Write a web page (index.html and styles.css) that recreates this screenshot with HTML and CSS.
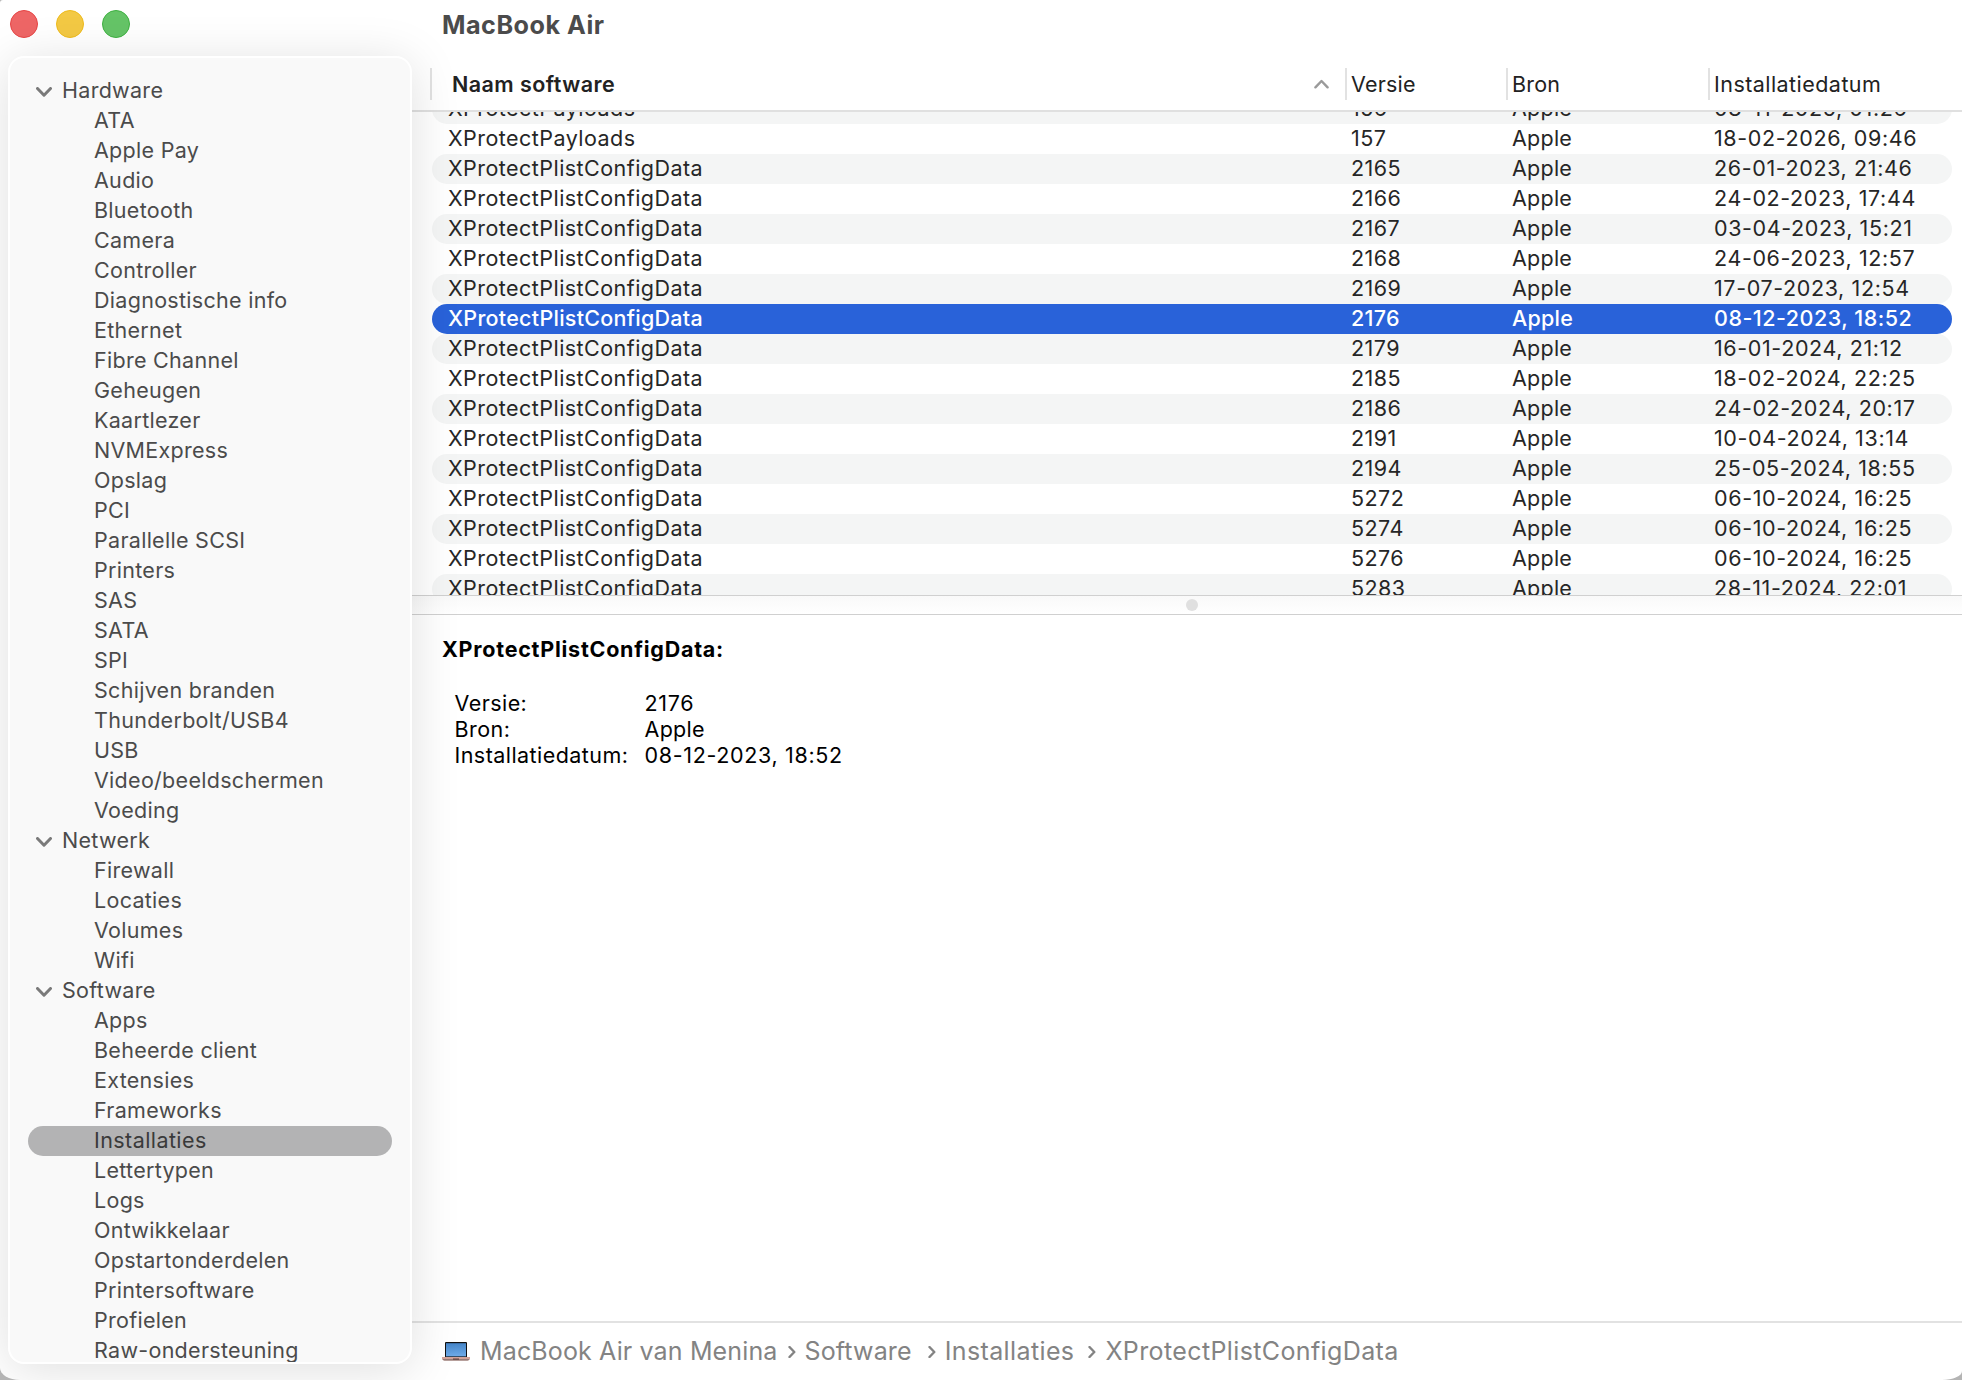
FILE: index.html
```html
<!DOCTYPE html>
<html lang="nl">
<head>
<meta charset="utf-8">
<title>MacBook Air</title>
<link rel="stylesheet" href="styles.css">
</head>
<body>
<div class="window">
  <div class="left">
    <div class="lights"><span class="light red"></span><span class="light yellow"></span><span class="light green"></span></div>
    <nav class="sidebar">
      <div class="group"><svg class="chev" viewBox="0 0 16 10"><path d="M1.5 1.5 8 8.2 14.5 1.5"/></svg>Hardware</div>
      <div class="item">ATA</div>
      <div class="item">Apple Pay</div>
      <div class="item">Audio</div>
      <div class="item">Bluetooth</div>
      <div class="item">Camera</div>
      <div class="item">Controller</div>
      <div class="item">Diagnostische info</div>
      <div class="item">Ethernet</div>
      <div class="item">Fibre Channel</div>
      <div class="item">Geheugen</div>
      <div class="item">Kaartlezer</div>
      <div class="item">NVMExpress</div>
      <div class="item">Opslag</div>
      <div class="item">PCI</div>
      <div class="item">Parallelle SCSI</div>
      <div class="item">Printers</div>
      <div class="item">SAS</div>
      <div class="item">SATA</div>
      <div class="item">SPI</div>
      <div class="item">Schijven branden</div>
      <div class="item">Thunderbolt/USB4</div>
      <div class="item">USB</div>
      <div class="item">Video/beeldschermen</div>
      <div class="item">Voeding</div>
      <div class="group"><svg class="chev" viewBox="0 0 16 10"><path d="M1.5 1.5 8 8.2 14.5 1.5"/></svg>Netwerk</div>
      <div class="item">Firewall</div>
      <div class="item">Locaties</div>
      <div class="item">Volumes</div>
      <div class="item">Wifi</div>
      <div class="group"><svg class="chev" viewBox="0 0 16 10"><path d="M1.5 1.5 8 8.2 14.5 1.5"/></svg>Software</div>
      <div class="item">Apps</div>
      <div class="item">Beheerde client</div>
      <div class="item">Extensies</div>
      <div class="item">Frameworks</div>
      <div class="item active">Installaties</div>
      <div class="item">Lettertypen</div>
      <div class="item">Logs</div>
      <div class="item">Ontwikkelaar</div>
      <div class="item">Opstartonderdelen</div>
      <div class="item">Printersoftware</div>
      <div class="item">Profielen</div>
      <div class="item">Raw-ondersteuning</div>
    </nav>
  </div>
  <main class="main">
    <h1 class="title">MacBook Air</h1>
    <div class="thead">
      <div class="th name">Naam software<svg class="sort" viewBox="0 0 16 10"><path d="M1.5 8.5 8 1.8 14.5 8.5"/></svg></div>
      <div class="th short">Versie</div>
      <div class="th short">Bron</div>
      <div class="th">Installatiedatum</div>
    </div>
    <div class="table">
      <div class="row"><span>XProtectPayloads</span><span>156</span><span>Apple</span><span>08-11-2025, 01:26</span></div>
      <div class="row"><span>XProtectPayloads</span><span>157</span><span>Apple</span><span>18-02-2026, 09:46</span></div>
      <div class="row"><span>XProtectPlistConfigData</span><span>2165</span><span>Apple</span><span>26-01-2023, 21:46</span></div>
      <div class="row"><span>XProtectPlistConfigData</span><span>2166</span><span>Apple</span><span>24-02-2023, 17:44</span></div>
      <div class="row"><span>XProtectPlistConfigData</span><span>2167</span><span>Apple</span><span>03-04-2023, 15:21</span></div>
      <div class="row"><span>XProtectPlistConfigData</span><span>2168</span><span>Apple</span><span>24-06-2023, 12:57</span></div>
      <div class="row"><span>XProtectPlistConfigData</span><span>2169</span><span>Apple</span><span>17-07-2023, 12:54</span></div>
      <div class="row selected"><span>XProtectPlistConfigData</span><span>2176</span><span>Apple</span><span>08-12-2023, 18:52</span></div>
      <div class="row"><span>XProtectPlistConfigData</span><span>2179</span><span>Apple</span><span>16-01-2024, 21:12</span></div>
      <div class="row"><span>XProtectPlistConfigData</span><span>2185</span><span>Apple</span><span>18-02-2024, 22:25</span></div>
      <div class="row"><span>XProtectPlistConfigData</span><span>2186</span><span>Apple</span><span>24-02-2024, 20:17</span></div>
      <div class="row"><span>XProtectPlistConfigData</span><span>2191</span><span>Apple</span><span>10-04-2024, 13:14</span></div>
      <div class="row"><span>XProtectPlistConfigData</span><span>2194</span><span>Apple</span><span>25-05-2024, 18:55</span></div>
      <div class="row"><span>XProtectPlistConfigData</span><span>5272</span><span>Apple</span><span>06-10-2024, 16:25</span></div>
      <div class="row"><span>XProtectPlistConfigData</span><span>5274</span><span>Apple</span><span>06-10-2024, 16:25</span></div>
      <div class="row"><span>XProtectPlistConfigData</span><span>5276</span><span>Apple</span><span>06-10-2024, 16:25</span></div>
      <div class="row"><span>XProtectPlistConfigData</span><span>5283</span><span>Apple</span><span>28-11-2024, 22:01</span></div>
    </div>
    <div class="splitter"><span class="knob"></span></div>
    <section class="detail">
      <h2 class="dtitle">XProtectPlistConfigData:</h2>
      <dl class="facts">
        <dt>Versie:</dt><dd>2176</dd>
        <dt>Bron:</dt><dd class="word">Apple</dd>
        <dt>Installatiedatum:</dt><dd>08-12-2023, 18:52</dd>
      </dl>
    </section>
    <footer class="path">
      <svg class="laptop" viewBox="0 0 28 20"><defs><linearGradient id="scr" x1="0" y1="0" x2="0" y2="1"><stop offset="0" stop-color="#4585c8"/><stop offset="1" stop-color="#6fabe8"/></linearGradient></defs><rect x="3" y="0" width="22" height="15.5" rx="1" fill="#111"/><rect x="4" y="1.2" width="20" height="13.2" fill="url(#scr)"/><path d="M0 15h28v1.8q-.6 1.7-2.4 1.7H2.4Q.6 18.500 0 16.800z" fill="#d3a49a"/><path d="M.4 17.300h27.200q-.8 1.200-2.200 1.200H2.600q-1.400 0-2.200-1.200z" fill="#85706c"/><path d="M11 16.500h6v1.200h-6z" fill="#5c3f3c"/></svg>
      <span class="device">MacBook Air van Menina</span><svg class="sep" viewBox="0 0 8 12"><path d="M1.500 1 6.300 6 1.500 11"/></svg><span class="section">Software</span><svg class="sep" viewBox="0 0 8 12"><path d="M1.500 1 6.300 6 1.500 11"/></svg><span class="page">Installaties</span><svg class="sep" viewBox="0 0 8 12"><path d="M1.500 1 6.300 6 1.500 11"/></svg><span>XProtectPlistConfigData</span>
    </footer>
  </main>
</div>
</body>
</html>
```
FILE: styles.css
```css
* { box-sizing: border-box; margin: 0; padding: 0; }
body { background: #b4b4b4; font-family: Inter, sans-serif; font-size: 21.5px; color: #262626; }
.window { display: flex; width: 1962px; height: 1380px; background: #fff; border-radius: 3px 0 20px 20px / 3px 0 9px 12px; overflow: hidden; }
.left { position: relative; z-index: 1; width: 412px; padding-left: 8px; flex: none; display: flex; flex-direction: column; }
.lights { display: flex; gap: 18px; height: 56px; padding: 10px 0 0 2px; }
.light { width: 28px; height: 28px; border-radius: 50%; border: 1px solid; }
.red { background: #ee6666; border-color: #e64545; }
.yellow { background: #f3c944; border-color: #eebb1c; }
.green { background: #65c467; border-color: #3eb141; }
.sidebar { height: 1308px; border: 2px solid #fff; border-radius: 16px; padding: 18px 18px 0; overflow: hidden; background: #f9f9f9; box-shadow: 0 6px 50px rgba(0,0,0,.13); color: #4b4b4b; letter-spacing: .29px; }
.group, .item { height: 30px; line-height: 28px; white-space: nowrap; }
.group { display: flex; padding-left: 8px; }
.chev { width: 16px; height: 10px; margin: 11px 10px 0 0; }
.chev path, .sort path { fill: none; stroke: #7a7a7a; stroke-width: 3; stroke-linecap: round; stroke-linejoin: round; }
.item { padding-left: 66px; }
.active { background: #b3b3b4; border-radius: 15px; color: #3a3a3a; letter-spacing: .42px; }
.main { flex: 1; display: flex; flex-direction: column; min-width: 0; }
.title { height: 68px; padding-left: 30px; font-size: 25.2px; font-weight: 700; line-height: 50px; color: #4b4b4b; letter-spacing: .5px; }
.thead { height: 44px; padding-left: 18px; border-bottom: 2px solid #e0e0e0; display: grid; grid-template-columns: 915px 161px 202px 1fr; }
.th { height: 32px; border-left: 2px solid #e2e2e2; padding-left: 4px; line-height: 32px; color: #222; letter-spacing: .45px; }
.short { letter-spacing: .2px; }
.name { display: flex; justify-content: space-between; padding: 0 16px 0 20px; font-weight: 600; }
.sort { width: 15px; height: 10px; margin-top: 11px; }
.sort path { stroke: #9a9a9a; stroke-width: 2.6; }
.table { height: 483px; overflow: hidden; padding: 0 10px 0 20px; }
.row { height: 30px; line-height: 28px; border-radius: 15px; padding-left: 16px; display: grid; grid-template-columns: 903px 161px 202px 1fr; white-space: nowrap; letter-spacing: .45px; }
.row span:nth-child(3) { letter-spacing: .25px; }
.row span:nth-child(4) { letter-spacing: .62px; }
.row:first-child { margin-top: -18px; }
.row:nth-child(odd) { background: #f4f5f5; }
.row.selected { background: #2962d9; color: #fff; font-weight: 500; letter-spacing: .27px; }
.row.selected span:nth-child(4) { letter-spacing: .5px; }
.splitter { height: 20px; border-top: 1px solid #d0d0d0; border-bottom: 1px solid #d0d0d0; background: linear-gradient(#f9f9f9, #fff); display: flex; justify-content: center; align-items: center; padding-left: 9px; }
.knob { width: 12px; height: 12px; border-radius: 50%; background: #e0e0e0; }
.detail { flex: 1; padding: 20px 0 0 30px; color: #000; }
.dtitle { font-size: 21.5px; line-height: 28px; font-weight: 700; letter-spacing: .75px; }
.facts { display: grid; grid-template-columns: 190px 1fr; line-height: 26px; padding: 27px 0 0 12.5px; letter-spacing: .44px; }
.facts dd { letter-spacing: .66px; }
.facts .word { letter-spacing: .3px; }
.path { height: 59px; border-top: 2px solid #e2e2e2; display: flex; align-items: center; padding: 0 0 2px 30px; font-size: 25px; color: #838383; white-space: nowrap; letter-spacing: .38px; }
.device, .section { letter-spacing: .14px; }
.laptop { width: 28px; height: 20px; margin: 2px 10px 0 0; }
.sep { width: 8px; height: 12px; margin: 2px 9px 0 16px; }
.device + .sep { margin-left: 10px; }
.page + .sep { margin-left: 14px; }
.sep path { fill: none; stroke: #838383; stroke-width: 2.4; stroke-linecap: round; stroke-linejoin: round; }
```
